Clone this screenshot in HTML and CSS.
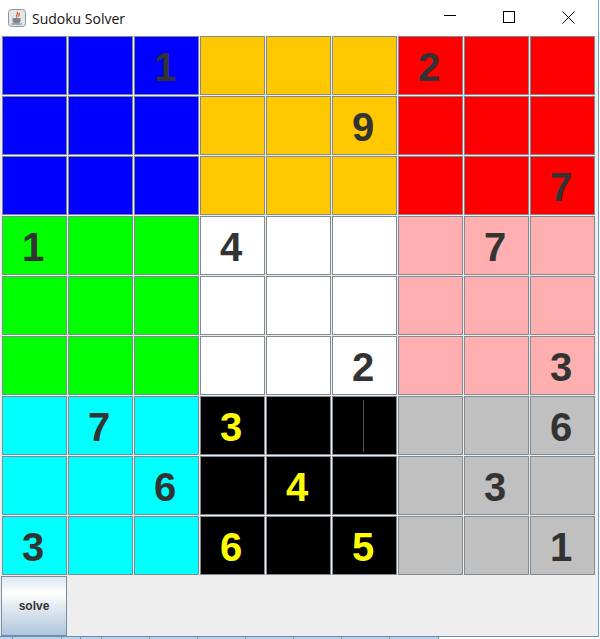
FILE: index.html
```html
<!DOCTYPE html>
<html lang="en">
<head>
  <meta charset="UTF-8">
  <title>Sudoku Solver</title>
  <link rel="stylesheet" href="styles.css">
</head>
<body>
  <section class="window">
    <header class="titlebar">
      <svg class="java-icon" width="18" height="18" viewBox="0 0 18 18">
        <rect x="0.500" y="0.500" width="17" height="17" rx="3" fill="#e4e6ea" stroke="#8d97a3"/>
        <path d="M9 3c2 2-2 3 0 5.500M11 4c1 2-1 2 0 3.500" fill="none" stroke="#d9662c" stroke-width="1.400"/>
        <path d="M4.500 9h8v2.500a2.500 2.500 0 0 1-2.500 2.500H7a2.500 2.500 0 0 1-2.500-2.500z" fill="#7c8794"/>
        <path d="M3.500 15h10" stroke="#5b6672"/>
      </svg>
      <span class="title">Sudoku Solver</span>
      <div class="controls">
        <svg width="12" height="12" viewBox="0 0 12 12"><path d="M0 4.500h12" stroke="#000"/></svg>
        <svg width="12" height="12" viewBox="0 0 12 12"><rect x="0.500" y="0.500" width="11" height="11" fill="none" stroke="#000"/></svg>
        <svg width="13" height="13" viewBox="0 0 13 13"><path d="M0.500 0.500l12 12M12.500 0.500l-12 12" stroke="#000"/></svg>
      </div>
    </header>
    <main class="board" id="board"></main>
    <footer class="actions">
      <button class="solve" type="button">solve</button>
    </footer>
  </section>
  <div class="behind">
    <span></span><span></span><span></span><span></span><span></span><span></span>
    <span></span><span></span><span></span><span></span><span></span>
  </div>
  <script src="board.js"></script>
</body>
</html>
```

FILE: styles.css
```css
*,
*::before,
*::after{
  box-sizing: border-box;
}
html, body{
  margin: 0;
  background-color: #fff;
}
body{
  width: 600px;
  height: 639px;
  overflow: hidden;
}
.window{
  width: 599px;
  height: 637px;
  background-color: #eee;
  border-right: 1px solid #6fa3d8;
  border-bottom: 1px solid #5f8fc0;
}
.titlebar{
  display: flex;
  align-items: center;
  height: 36px;
  padding-left: 8px;
  background-color: #fff;
  font-family: "Open Sans", "Liberation Sans", sans-serif;
  font-size: 14px;
  color: #111;
}
.java-icon{
  margin-right: 6px;
}
.controls{
  display: flex;
  align-items: center;
  gap: 47px;
  margin-left: auto;
  margin-right: 23px;
  margin-bottom: 2px;
}
.board{
  display: grid;
  grid-template-columns: repeat(9, 66px);
  grid-template-rows: repeat(9, 60px);
  padding-left: 2px;
}
.cell{
  display: flex;
  align-items: center;
  justify-content: center;
  margin: 0 1px 1px 0;
  padding: 4px 3px 0 0;
  border: 1px solid #808a92;
  font-family: "Liberation Sans", sans-serif;
  font-weight: bold;
  font-size: 40px;
  color: #333;
  background-color: #fff;
}
.cell.black{
  color: #ff0;
}
.mark{
  width: 1px;
  height: 52px;
  margin-bottom: 4px;
  background-color: #555;
}
.blue{ background-color: #00f; }
.orange{ background-color: #ffc800; }
.red{ background-color: #f00; }
.green{ background-color: #0f0; }
.white{ background-color: #fff; }
.pink{ background-color: #ffafaf; }
.cyan{ background-color: #0ff; }
.black{ background-color: #000; }
.gray{ background-color: #c0c0c0; }
.actions{
  display: flex;
  padding-left: 1px;
}
.solve{
  width: 66px;
  height: 60px;
  padding: 0;
  border: 1px solid #7a8ba0;
  background: linear-gradient(#dde6ef 0%, #fff 28%, #e6ebf2 50%, #afc6df 100%);
  font-family: "Liberation Sans", sans-serif;
  font-weight: bold;
  font-size: 12px;
  color: #333;
}
.behind{
  display: grid;
  grid-template-columns: 13px 49px 19px 21px repeat(6, 48px) 49px;
  height: 2px;
}
.behind span{
  background-color: #bcd3e8;
  border-right: 1px solid #6f95bd;
}
```

FILE: board.js
```js
const regions = ["blue", "orange", "red", "green", "white", "pink", "cyan", "black", "gray"];
const values = [
  "  1   2  ",
  "     9   ",
  "        7",
  "1  4   7 ",
  "         ",
  "     2  3",
  " 7 3    6",
  "  6 4  3 ",
  "3  6 5  1"
];
const board = document.getElementById("board");

values.forEach((row, r) => {
  row.split("").forEach((val, c) => {
    const cell = document.createElement("div");
    const region = regions[Math.floor(r / 3) * 3 + Math.floor(c / 3)];
    cell.className = "cell " + region;
    cell.textContent = val.trim();
    // the black cell in row 7 has a stray line through it
    if (r === 6 && c === 5) {
      const mark = document.createElement("span");
      mark.className = "mark";
      cell.appendChild(mark);
    }
    board.appendChild(cell);
  });
});
```
